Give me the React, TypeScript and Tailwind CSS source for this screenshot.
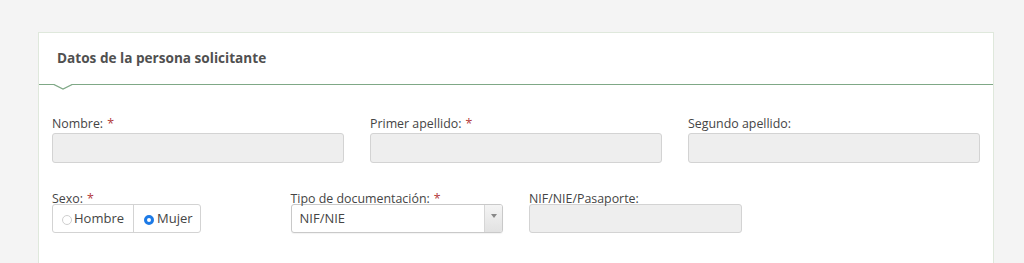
import React from "react";

const Label = ({ text, required }: { text: string; required?: boolean }) => (
  <label className="block text-[12.4px] leading-[18px] text-[#454545]">
    {text}
    {required && <span className="ml-1 text-[#b33a3a]">*</span>}
  </label>
);

const TextBox = () => (
  <div className="h-[30px] w-full rounded-[3px] border border-[#d3d3d3] bg-[#eeeeee]" />
);

const App = () => {
  return (
    <div className="h-[263px] w-full overflow-hidden bg-[#f4f4f4] pt-[32px] font-['Open_Sans',sans-serif]">
      <div className="ml-[38px] mr-[30px] h-[260px] border border-[#dfe8dc] bg-white">
        <div className="relative flex h-[52px] items-center border-b border-[#7fa886] px-[18px]">
          <h2 className="text-[13.6px] font-bold text-[#505050]">Datos de la persona solicitante</h2>
          <svg className="absolute left-[14px] top-[50px]" width="20" height="8" viewBox="0 0 20 8">
            <path d="M0 1 L10 6 L20 1" fill="white" stroke="#7fa886" strokeWidth="1.2" />
            <rect x="0" y="0" width="20" height="1" fill="white" />
          </svg>
        </div>

        <div className="px-[13px] pt-[30px]">
          <div className="grid grid-cols-3 gap-x-[26px]">
            <div>
              <Label text="Nombre:" required />
              <TextBox />
            </div>
            <div>
              <Label text="Primer apellido:" required />
              <TextBox />
            </div>
            <div>
              <Label text="Segundo apellido:" />
              <TextBox />
            </div>
          </div>

          <div className="mt-[27px] grid grid-cols-4 gap-x-[26px]">
            <div>
              <Label text="Sexo:" required />
              <div className="-mt-[4px] flex h-[29px] w-[149px] rounded-[3px] border border-[#d3d3d3] text-[13px] text-[#454545]">
                <div className="flex w-[81px] items-center border-r border-[#d3d3d3] pl-[9px]">
                  <span className="mr-[2px] mt-[3px] inline-block h-[10px] w-[10px] rounded-full border border-[#cfcfcf] bg-white" />
                  Hombre
                </div>
                <div className="flex flex-1 items-center pl-[10px]">
                  <span className="mr-[3px] mt-[2px] inline-block h-[10px] w-[10px] rounded-full border-[3px] border-[#1d7ae6] bg-white" />
                  Mujer
                </div>
              </div>
            </div>
            <div>
              <Label text="Tipo de documentación:" required />
              <div className="-mt-[4px] flex h-[29px] w-full overflow-hidden rounded-[3px] border border-[#c9c9c9] bg-white text-[13px] text-[#454545] shadow-[0_1px_1px_rgba(0,0,0,0.05)]">
                <div className="flex flex-1 items-center pl-[8px]">NIF/NIE</div>
                <div className="flex w-[18px] items-start justify-center border-l border-[#d6d6d6] bg-gradient-to-b from-[#f4f4f4] to-[#e2e2e2] pt-[9px]">
                  <svg width="6" height="4" viewBox="0 0 6 4">
                    <path d="M0 0 L6 0 L3 4 Z" fill="#888" />
                  </svg>
                </div>
              </div>
            </div>
            <div>
              <Label text="NIF/NIE/Pasaporte:" />
              <div className="-mt-[4px] h-[29px] w-full rounded-[3px] border border-[#d3d3d3] bg-[#eeeeee]" />
            </div>
            <div />
          </div>
        </div>
      </div>
    </div>
  );
};

export default App;
